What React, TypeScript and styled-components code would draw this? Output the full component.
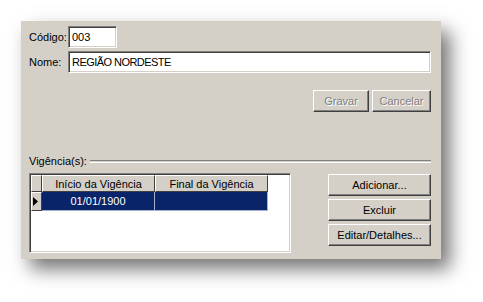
import React from "react";
import styled, { createGlobalStyle, css } from "styled-components";

const Global = createGlobalStyle`
  html, body { margin: 0; padding: 0; background: #fff; }
  body { font-family: "Liberation Sans", Arial, sans-serif; font-size: 11px; color: #000; }
`;

const Page = styled.div`
  padding: 21px 0 0 21px;
  width: 483px;
  height: 302px;
  box-sizing: border-box;
  overflow: hidden;
`;

const Dialog = styled.div`
  width: 420px;
  height: 238px;
  box-sizing: border-box;
  background: #d4d0c8;
  padding: 5px 10px 0 8px;
  box-shadow: 9px 10px 18px rgba(0, 0, 0, 0.55);
  display: flex;
  flex-direction: column;
`;

const FieldGrid = styled.div`
  display: grid;
  grid-template-columns: 39px auto;
  row-gap: 3px;
  align-items: center;
`;

const Label = styled.span`
  white-space: nowrap;
  line-height: 13px;
`;

const sunken = css`
  border: 1px solid;
  border-color: #808080 #ffffff #ffffff #808080;
  box-shadow: inset 1px 1px #404040, inset -1px -1px #d4d0c8;
`;

const TextBox = styled.div<{ $w: number }>`
  ${sunken};
  box-sizing: border-box;
  width: ${(p) => p.$w}px;
  height: 22px;
  background: #fff;
  padding: 3px 0 0 3px;
  line-height: 14px;
  white-space: nowrap;
`;

const Caps = styled.span`
  letter-spacing: -0.55px;
`;

const ActionRow = styled.div`
  display: flex;
  justify-content: flex-end;
  gap: 3px;
  margin-top: 17px;
`;

const Button = styled.div<{ $w?: number; $disabled?: boolean }>`
  box-sizing: border-box;
  width: ${(p) => (p.$w ? `${p.$w}px` : "100%")};
  height: 22px;
  border: 1px solid;
  border-color: #ffffff #404040 #404040 #ffffff;
  box-shadow: inset -1px -1px #808080;
  background: #d4d0c8;
  display: flex;
  align-items: center;
  justify-content: center;
  white-space: nowrap;
  color: ${(p) => (p.$disabled ? "#808080" : "#000")};
  text-shadow: ${(p) => (p.$disabled ? "1px 1px #ffffff" : "none")};
`;

const GroupHeader = styled.div`
  display: flex;
  align-items: center;
  gap: 3px;
  margin-top: 42px;
  margin-left: 0px;
  height: 14px;
`;

const Etched = styled.div`
  flex: 1;
  height: 1px;
  border-top: 1px solid #808080;
  border-bottom: 1px solid #ffffff;
  margin-top: 1px;
`;

const Lower = styled.div`
  display: flex;
  justify-content: space-between;
  margin-top: 5px;
`;

const Grid = styled.div`
  ${sunken};
  box-sizing: border-box;
  width: 262px;
  height: 80px;
  background: #fff;
  padding: 1px;
  display: flex;
  flex-direction: column;
`;

const GridRow = styled.div`
  display: flex;
`;

const IndicatorCell = styled.div<{ $h: number }>`
  box-sizing: border-box;
  width: 11px;
  height: ${(p) => p.$h}px;
  background: #d4d0c8;
  border: 1px solid;
  border-color: #ffffff #404040 #404040 #ffffff;
  display: flex;
  align-items: center;
  padding-left: 1px;
`;

const HeaderCell = styled.div`
  box-sizing: border-box;
  width: 113px;
  height: 17px;
  background: #d4d0c8;
  border: 1px solid;
  border-color: #ffffff #404040 #404040 #ffffff;
  display: flex;
  align-items: center;
  justify-content: center;
  white-space: nowrap;
`;

const DataCell = styled.div`
  box-sizing: border-box;
  width: 113px;
  height: 19px;
  background: #0a246a;
  color: #fff;
  border-right: 1px solid #a6b0cc;
  border-bottom: 1px solid #a6b0cc;
  display: flex;
  align-items: center;
  justify-content: center;
  white-space: nowrap;
`;

const SideButtons = styled.div`
  width: 103px;
  display: flex;
  flex-direction: column;
  gap: 3px;
  margin-top: 1px;
`;

const Arrow = () => (
  <svg width="5" height="9" viewBox="0 0 5 9">
    <polygon points="0,0 5,4.5 0,9" fill="#000" />
  </svg>
);

export default function App() {
  return (
    <>
      <Global />
      <Page>
        <Dialog>
          <FieldGrid>
            <Label>Código:</Label>
            <TextBox $w={49}>003</TextBox>
            <Label>Nome:</Label>
            <TextBox $w={363}>
              <Caps>REGIÃO NORDESTE</Caps>
            </TextBox>
          </FieldGrid>
          <ActionRow>
            <Button $w={56} $disabled>
              Gravar
            </Button>
            <Button $w={59} $disabled>
              Cancelar
            </Button>
          </ActionRow>
          <GroupHeader>
            <Label>Vigência(s):</Label>
            <Etched />
          </GroupHeader>
          <Lower>
            <Grid>
              <GridRow>
                <IndicatorCell $h={17} />
                <HeaderCell>Início da Vigência</HeaderCell>
                <HeaderCell>Final da Vigência</HeaderCell>
              </GridRow>
              <GridRow>
                <IndicatorCell $h={19}>
                  <Arrow />
                </IndicatorCell>
                <DataCell>01/01/1900</DataCell>
                <DataCell />
              </GridRow>
            </Grid>
            <SideButtons>
              <Button>Adicionar...</Button>
              <Button>Excluir</Button>
              <Button>Editar/Detalhes...</Button>
            </SideButtons>
          </Lower>
        </Dialog>
      </Page>
    </>
  );
}
